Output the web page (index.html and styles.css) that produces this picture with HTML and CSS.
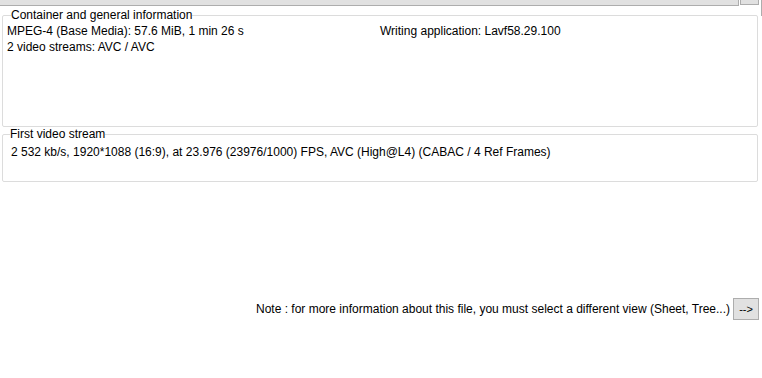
FILE: index.html
```html
<!DOCTYPE html>
<html>

<head>
    <title>
        Media info
    </title>
    <meta name="viewport" content="width=device-width, initial-scale=1.0">
    <link rel="stylesheet" href="styles.css">
</head>

<body>
    <div class="top-bar">
        <div class="combo"></div>
        <div class="combo-btn"></div>
        <div class="edge"></div>
    </div>

    <fieldset class="group group-general">
        <legend>Container and general information</legend>
        <div class="general-info">
            <div class="info-col">
                <div>MPEG-4 (Base Media): 57.6 MiB, 1 min 26 s</div>
                <div>2 video streams: AVC / AVC</div>
            </div>
            <div class="info-col">
                <div>Writing application: Lavf58.29.100</div>
            </div>
        </div>
    </fieldset>

    <fieldset class="group group-video">
        <legend>First video stream</legend>
        <div class="video-info">2 532 kb/s, 1920*1088 (16:9), at 23.976 (23976/1000) FPS, AVC (High@L4) (CABAC / 4 Ref Frames)</div>
    </fieldset>

    <div class="note">
        <span>Note : for more information about this file, you must select a different view (Sheet, Tree...)</span>
        <button class="next-btn">--&gt;</button>
    </div>
</body>

</html>
```

FILE: styles.css
```css
* {
    box-sizing: border-box;
    padding: 0;
    margin: 0;
}

body {
    font-family: "Liberation Sans", Arial, sans-serif;
    font-size: 12px;
    color: #000;
    background-color: #fff;
    width: 762px;
    height: 378px;
    overflow: hidden;
}

.top-bar {
    display: flex;
    height: 6px;
}

.combo {
    width: 739px;
    height: 6px;
    background-color: #e1e1e1;
    border-bottom: 1px solid #adadad;
    border-right: 1px solid #adadad;
}

.combo-btn {
    width: 19px;
    height: 5px;
    margin-left: 1px;
    border: 1px solid #adadad;
    border-top: 0;
    background-color: #e1e1e1;
}

.edge {
    width: 1px;
    height: 16px;
    margin-left: 2px;
    background-color: #adadad;
}

.group {
    border: 1px solid #dcdcdc;
    border-radius: 2px;
    margin-left: 2px;
    width: 756px;
}

.group legend {
    line-height: 14px;
    padding: 0;
}

.group-general {
    margin-top: 2px;
    height: 119px;
}

.group-general legend {
    margin-left: 8px;
}

.general-info {
    display: grid;
    grid-template-columns: 373px auto;
    padding: 1px 0 0 4px;
    line-height: 16px;
}

.group-video {
    margin-top: 0;
    height: 55px;
}

.group-video legend {
    margin-left: 7px;
}

.video-info {
    padding: 3px 0 0 8px;
    line-height: 16px;
}

.note {
    display: flex;
    justify-content: flex-end;
    align-items: center;
    gap: 3px;
    margin-top: 116px;
    padding-right: 3px;
}

.next-btn {
    width: 26px;
    height: 22px;
    font-family: "Liberation Sans", Arial, sans-serif;
    font-size: 11px;
    background-color: #e1e1e1;
    border: 1px solid #adadad;
    color: #000;
}
```
